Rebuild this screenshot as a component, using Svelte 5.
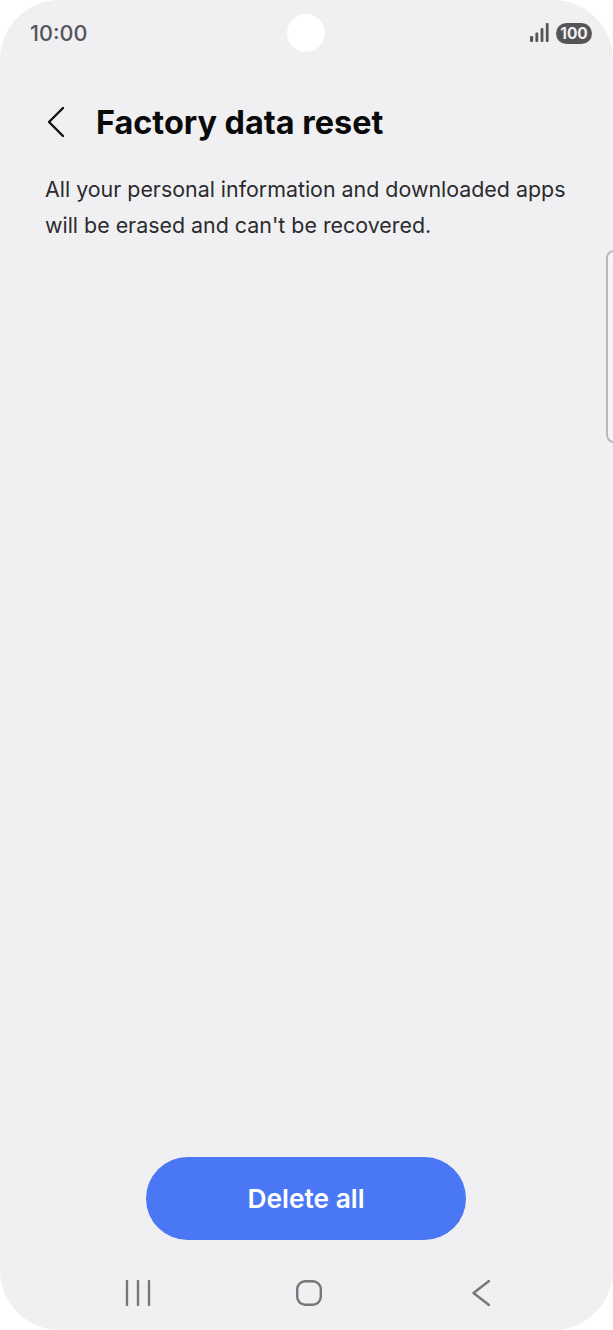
<script>
	const lines = ['All your personal information and downloaded apps', "will be erased and can't be recovered."];
</script>

<div class="screen">
	<div class="camera"></div>
	<div class="side-handle"></div>

	<header class="status">
		<span class="time">10:00</span>
		<div class="status-right">
			<svg width="20" height="20" viewBox="0 0 20 20" class="signal">
				<rect x="0" y="13" width="3.2" height="6" rx="1.3" />
				<rect x="5.4" y="9.5" width="2.8" height="9.5" rx="1" />
				<rect x="10.6" y="5" width="2.8" height="14" rx="1" />
				<rect x="15.8" y="0" width="2.8" height="19" rx="1" />
			</svg>
			<span class="battery">100</span>
		</div>
	</header>

	<div class="titlebar">
		<button class="back" aria-label="Back">
			<svg width="20" height="32" viewBox="0 0 20 32">
				<path d="M17 2 L3 16 L17 30" />
			</svg>
		</button>
		<h1>Factory data reset</h1>
	</div>

	<p class="info">
		{#each lines as line}
			<span>{line}</span>
		{/each}
	</p>

	<div class="actions">
		<button class="delete">Delete all</button>
	</div>

	<nav class="navbar">
		<svg width="26" height="26" viewBox="0 0 26 26">
			<path d="M2 1 V25 M13 1 V25 M24 1 V25" />
		</svg>
		<svg width="26" height="26" viewBox="0 0 26 26">
			<rect x="1.2" y="1.2" width="23.6" height="23.6" rx="8" />
		</svg>
		<svg class="nav-back" width="18" height="26" viewBox="0 0 18 26">
			<path d="M17 1 L1.5 13 L17 25" />
		</svg>
	</nav>
</div>

<style>
	:global(body) {
		background: #fff;
	}

	.screen {
		position: relative;
		width: 613px;
		height: 1330px;
		display: flex;
		flex-direction: column;
		background: #f0f0f3;
		border-radius: 60px;
		overflow: hidden;
		font-family: Inter, "Noto Sans", sans-serif;
	}

	.camera {
		position: absolute;
		left: 287px;
		top: 14px;
		width: 38px;
		height: 38px;
		border-radius: 50%;
		background: #fff;
	}

	.side-handle {
		position: absolute;
		right: -13px;
		top: 250px;
		width: 20px;
		height: 193px;
		box-sizing: border-box;
		border: 2px solid #b9b9bc;
		border-radius: 8px;
		background: #f5f5f7;
	}

	.status {
		display: flex;
		justify-content: space-between;
		align-items: center;
		height: 66px;
		padding: 0 21px 0 30px;
	}

	.time {
		font-size: 21.6px;
		font-weight: 500;
		color: #555558;
	}

	.status-right {
		display: flex;
		align-items: center;
		gap: 6px;
	}

	.signal rect {
		fill: #555558;
	}

	.battery {
		display: block;
		width: 36px;
		height: 21px;
		line-height: 21px;
		border-radius: 11px;
		background: #555558;
		color: #f0f0f3;
		font-size: 15.5px;
		font-weight: 700;
		text-align: center;
	}

	.titlebar {
		display: flex;
		align-items: center;
		box-sizing: border-box;
		height: 105px;
		padding: 7px 0 0 46px;
		gap: 30px;
	}

	.back {
		display: flex;
		padding: 0;
		border: none;
		background: none;
	}

	.back path {
		fill: none;
		stroke: #111;
		stroke-width: 2.4;
		stroke-linecap: round;
		stroke-linejoin: round;
	}

	h1 {
		margin: 0;
		font-size: 32.4px;
		font-weight: 700;
		color: #0a0a0a;
	}

	.info {
		flex: 1;
		margin: 0;
		padding-left: 45px;
		font-size: 21.4px;
		line-height: 36px;
		color: #2b2b2d;
	}

	.info span {
		display: block;
	}

	.actions {
		display: flex;
		justify-content: center;
		padding-right: 1px;
	}

	.delete {
		width: 320px;
		height: 83px;
		border: none;
		border-radius: 42px;
		background: #4a78f5;
		color: #fff;
		font-family: inherit;
		font-size: 26.3px;
		font-weight: 600;
	}

	.navbar {
		display: flex;
		align-items: center;
		gap: 145px;
		height: 90px;
		padding: 26px 0 11px 125px;
		box-sizing: border-box;
	}

	.nav-back {
		margin-left: 5px;
	}

	.navbar path,
	.navbar rect {
		fill: none;
		stroke: #77777a;
		stroke-width: 2.4;
		stroke-linecap: round;
		stroke-linejoin: round;
	}
</style>
